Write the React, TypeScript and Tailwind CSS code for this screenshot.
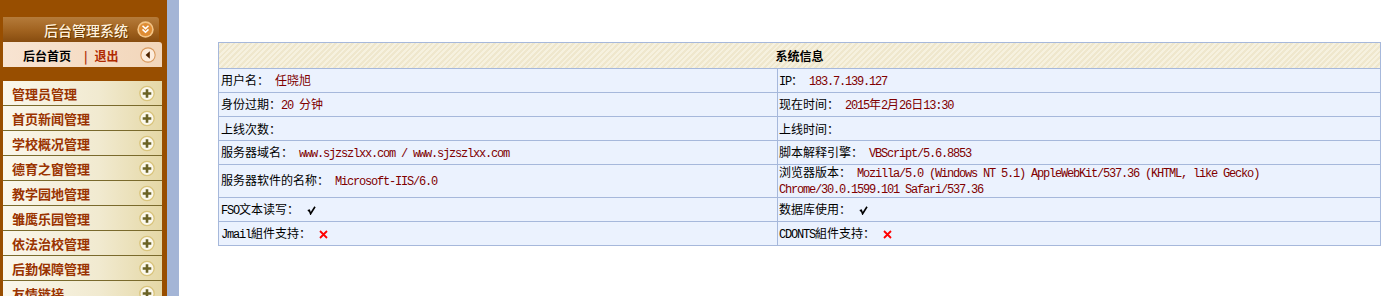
import React from "react";

const MONO = "font-['Liberation_Mono',monospace] tracking-[-1.2px] whitespace-pre";

function M({ children }: { children: React.ReactNode }) {
  return <span className={MONO}>{children}</span>;
}

function V({ children }: { children: React.ReactNode }) {
  return <span className="text-[#800000]">{children}</span>;
}

function Tick() {
  return (
    <svg width="9" height="9" viewBox="0 0 9 9" className="inline-block ml-[2px] align-[-1px]">
      <path d="M0.8 4.8 L2.3 4.2 L3.6 7.8 L8 0.8" stroke="#000" strokeWidth="1.6" fill="none" />
    </svg>
  );
}

function Cross() {
  return (
    <svg width="9" height="9" viewBox="0 0 9 9" className="inline-block ml-[2px] align-[-1px]">
      <path d="M1 1 L8 8 M8 1 L1 8" stroke="#ff0000" strokeWidth="1.8" fill="none" />
    </svg>
  );
}

function TitleIcon() {
  return (
    <svg width="17" height="17" viewBox="0 0 17 17">
      <circle cx="8.5" cy="8.5" r="8.2" fill="#f3c486" />
      <circle cx="8.5" cy="8.5" r="6.6" fill="#de8c34" />
      <path d="M5.5 4.8 L8.5 7.6 L11.5 4.8 M5.5 8.4 L8.5 11.3 L11.5 8.4" stroke="#fff" strokeWidth="1.5" fill="none" />
    </svg>
  );
}

function BackIcon() {
  return (
    <svg width="16" height="16" viewBox="0 0 16 16">
      <circle cx="8" cy="8" r="7.7" fill="#d9995c" />
      <circle cx="8" cy="8" r="6.6" fill="#fcecdc" />
      <path d="M9.8 4.3 L5.6 8 L9.8 11.7 Z" fill="#4e2400" />
    </svg>
  );
}

function PlusIcon() {
  return (
    <svg width="16" height="17" viewBox="0 0 16 17">
      <circle cx="8" cy="8.5" r="7.8" fill="#d9c47c" />
      <circle cx="8" cy="8.5" r="6.5" fill="#fbf8ec" />
      <path d="M8 4.2 V12.8 M3.7 8.5 H12.3" stroke="#6b6326" strokeWidth="2.6" />
    </svg>
  );
}

const menus = [
  "管理员管理",
  "首页新闻管理",
  "学校概况管理",
  "德育之窗管理",
  "教学园地管理",
  "雏鹰乐园管理",
  "依法治校管理",
  "后勤保障管理",
  "友情链接",
];

function Row({
  left,
  right,
  tall,
  last,
}: {
  left: React.ReactNode;
  right: React.ReactNode;
  tall?: boolean;
  last?: boolean;
}) {
  return (
    <div className={`flex ${tall ? "h-[32px]" : "h-[23px]"} ${last ? "" : "border-b border-[#a6b8db]"} box-content`}>
      <div className="w-[557px] border-r border-[#a6b8db] box-content flex items-center pl-[2px] whitespace-nowrap">
        <div>{left}</div>
      </div>
      <div className="w-[603px] flex items-center pl-[1px] whitespace-nowrap">
        <div className="leading-[14px]">{right}</div>
      </div>
    </div>
  );
}

export default function App() {
  return (
    <div className="flex h-screen overflow-hidden bg-white font-['Noto_Sans_CJK_SC',sans-serif] text-[12px] text-black">
      <aside className="w-[167px] shrink-0 bg-[#984e00] pt-[17px] pl-[3px]">
        <div className="w-[156px] h-[25px] flex items-center justify-end pr-[5px] gap-[9px] bg-[linear-gradient(to_bottom,#b57b3a,#a0621f_55%,#874c0f)] rounded-tr-[3px]">
          <span className="text-[14px] font-medium text-[#fff2de] [text-shadow:1px_1px_0_#6a3800] leading-none">后台管理系统</span>
          <TitleIcon />
        </div>
        <div className="w-[159px] h-[25px] flex items-center bg-[linear-gradient(to_right,#f8e4d2,#f2d6ba)] rounded-tr-[3px]">
          <span className="ml-[20px] font-bold text-[12px] text-black mt-[3px]">后台首页</span>
          <span className="ml-[13px] font-bold text-[#b02a00] mt-[3px]">|</span>
          <span className="ml-[7px] font-bold text-[#b02a00] mt-[3px]">退出</span>
          <span className="ml-auto mr-[6px]">
            <BackIcon />
          </span>
        </div>
        <div className="mt-[14px]">
          {menus.map((m) => (
            <div
              key={m}
              className="w-[159px] h-[24px] box-content border-b border-[#7a6a2c] flex items-center bg-[linear-gradient(to_right,#faf7ec,#f1ead0_60%,#e5d8a6)]"
            >
              <span className="pl-[9px] font-bold text-[13px] text-[#9a3300] leading-none">{m}</span>
              <span className="ml-auto mr-[7px] flex">
                <PlusIcon />
              </span>
            </div>
          ))}
        </div>
      </aside>
      <div className="w-[12px] shrink-0 bg-[#a4b5d6]" />
      <main className="flex-1 bg-white">
        <div className="ml-[39px] mt-[42px] w-[1163px] border border-[#a6b8db] bg-[#ebf2fe]">
          <div className="h-[25px] box-content border-b border-[#a6b8db] flex items-center justify-center font-bold bg-[repeating-linear-gradient(135deg,#f6f1df_0px,#f6f1df_2px,#efe7cd_2px,#efe7cd_4px)]">
            系统信息
          </div>
          <Row
            left={
              <>
                用户名：<M> </M>
                <V>任晓旭</V>
              </>
            }
            right={
              <>
                <M>IP</M>：
                <V>
                  <M> 183.7.139.127</M>
                </V>
              </>
            }
          />
          <Row
            left={
              <>
                身份过期：
                <V>
                  <M>20 </M>分钟
                </V>
              </>
            }
            right={
              <>
                现在时间：
                <V>
                  <M> 2015</M>年<M>2</M>月<M>26</M>日<M>13:30</M>
                </V>
              </>
            }
          />
          <Row left={<>上线次数：</>} right={<>上线时间：</>} />
          <Row
            left={
              <>
                服务器域名：
                <V>
                  <M> www.sjzszlxx.com / www.sjzszlxx.com</M>
                </V>
              </>
            }
            right={
              <>
                脚本解释引擎：
                <V>
                  <M> VBScript/5.6.8853</M>
                </V>
              </>
            }
          />
          <Row
            tall
            left={
              <>
                服务器软件的名称：
                <V>
                  <M> Microsoft-IIS/6.0</M>
                </V>
              </>
            }
            right={
              <>
                浏览器版本：
                <V>
                  <M> Mozilla/5.0 (Windows NT 5.1) AppleWebKit/537.36 (KHTML, like Gecko)</M>
                  <br />
                  <M>Chrome/30.0.1599.101 Safari/537.36</M>
                </V>
              </>
            }
          />
          <Row
            left={
              <>
                <M>FSO</M>文本读写：<M> </M>
                <Tick />
              </>
            }
            right={
              <>
                数据库使用：<M> </M>
                <Tick />
              </>
            }
          />
          <Row
            last
            left={
              <>
                <M>Jmail</M>組件支持：<M> </M>
                <Cross />
              </>
            }
            right={
              <>
                <M>CDONTS</M>組件支持：<M> </M>
                <Cross />
              </>
            }
          />
        </div>
      </main>
    </div>
  );
}
